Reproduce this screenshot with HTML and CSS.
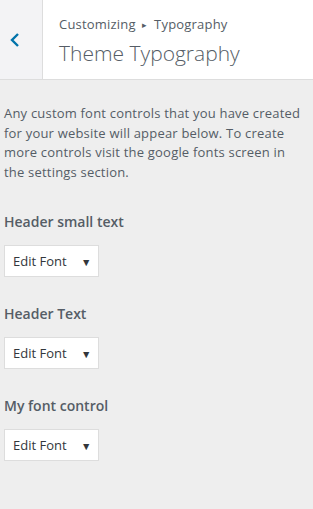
FILE: index.html
```html
<!DOCTYPE html>
<html>
    <head>
        <link rel="stylesheet" href="styles.css">
        <title>Theme Typography</title>
    </head>
    <body>
        <div class="head">
            <button class="back" aria-label="Back">
                <svg width="12" height="16" viewBox="0 0 12 16"><path d="M9 2 L3 8 L9 14" fill="none" stroke="#0073aa" stroke-width="2.4"/></svg>
            </button>
            <div class="titles">
                <div class="crumb">Customizing <span class="sep">&#9656;</span> Typography</div>
                <h1 class="title">Theme Typography</h1>
            </div>
        </div>

        <p class="desc">Any custom font controls that you have created for your website will appear below. To create more controls visit the google fonts screen in the settings section.</p>

        <div class="control">
            <span class="label">Header small text</span>
            <button class="edit">Edit Font <span class="arrow">&#9660;</span></button>
        </div>
        <div class="control">
            <span class="label">Header Text</span>
            <button class="edit">Edit Font <span class="arrow">&#9660;</span></button>
        </div>
        <div class="control">
            <span class="label">My font control</span>
            <button class="edit">Edit Font <span class="arrow">&#9660;</span></button>
        </div>
    </body>
</html>
```

FILE: styles.css
```css
body {
    margin: 0;
    background: #eeeeee;
    font-family: "Open Sans", "Noto Sans", sans-serif;
    color: #555d66;
}
.head {
    display: flex;
    height: 79px;
    background: white;
    border-bottom: 1px solid #dddddd;
}
.back {
    width: 43px;
    border: none;
    border-right: 1px solid #dddddd;
    background: #f3f3f5;
    padding: 0;
    display: flex;
    align-items: center;
    justify-content: center;
}
.back svg {
    margin-left: -12px;
}
.titles {
    padding: 14px 0 0 16px;
}
.crumb {
    font-size: 13px;
    line-height: 20px;
    letter-spacing: 0.2px;
}
.sep {
    font-size: 9px;
    position: relative;
    top: -1px;
    margin: 0 3px;
}
.title {
    margin: 3px 0 0;
    font-size: 21px;
    font-weight: 300;
    line-height: 28px;
    color: #555d66;
}
.desc {
    margin: 24px 4px 0 4px;
    font-size: 13px;
    line-height: 19.5px;
    letter-spacing: 0.2px;
}
.control {
    display: flex;
    flex-direction: column;
    align-items: flex-start;
    padding: 0 4px;
}
.label {
    margin-top: 30px;
    font-size: 14px;
    font-weight: 600;
    line-height: 20px;
}
.control + .control .label {
    margin-top: 27px;
}
.edit {
    margin-top: 13px;
    width: 95px;
    height: 32px;
    background: white;
    border: 1px solid #dddddd;
    font-family: "Open Sans", "Noto Sans", sans-serif;
    font-size: 13px;
    color: #32373c;
    text-align: left;
    padding: 0 0 0 8px;
}
.arrow {
    font-size: 10.5px;
    margin-left: 11px;
}
```
